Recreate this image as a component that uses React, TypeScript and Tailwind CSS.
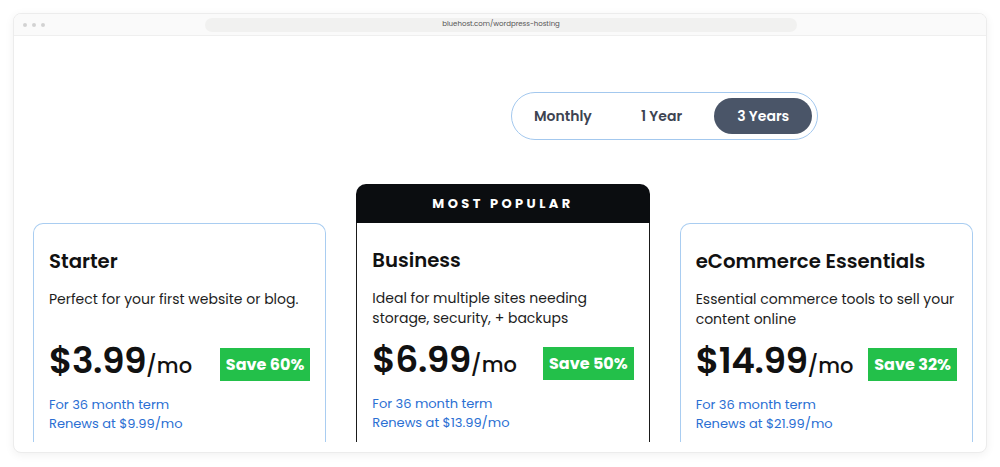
const plans = [
  {
    name: 'Starter',
    desc: 'Perfect for your first website or blog.',
    price: '$3.99',
    save: 'Save 60%',
    renew: 'Renews at $9.99/mo',
    popular: false,
  },
  {
    name: 'Business',
    desc: 'Ideal for multiple sites needing storage, security, + backups',
    price: '$6.99',
    save: 'Save 50%',
    renew: 'Renews at $13.99/mo',
    popular: true,
  },
  {
    name: 'eCommerce Essentials',
    desc: 'Essential commerce tools to sell your content online',
    price: '$14.99',
    save: 'Save 32%',
    renew: 'Renews at $21.99/mo',
    popular: false,
  },
];

const PlanBody = ({ plan }: { plan: (typeof plans)[number] }) => (
  <div className="px-[15px] pt-[23px]">
    <h3 className="text-[19.7px] leading-[28px] font-semibold text-[#111]">
      {plan.name}
    </h3>
    <p className="mt-[14px] h-[40px] text-[14px] leading-[20px] text-[#1d1d1d]">
      {plan.desc}
    </p>
    <div className="mt-[12px] flex items-center justify-between h-[40px]">
      <div className="flex items-baseline text-[#111]">
        <span className="text-[36px] leading-[40px] font-semibold tracking-[-0.5px]">
          {plan.price}
        </span>
        <span className="text-[21px] font-medium">/mo</span>
      </div>
      <span className="mt-[7px] h-[33px] px-[6px] flex items-center bg-[#23c04a] text-white text-[16px] font-bold">
        {plan.save}
      </span>
    </div>
    <div className="mt-[14px] text-[13px] leading-[19px] text-[#2b6fd3]">
      <div>For 36 month term</div>
      <div>{plan.renew}</div>
    </div>
  </div>
);

export default function App() {
  return (
    <div
      className="w-[1000px] h-[467px] bg-white pt-[13px] px-[13px]"
      style={{ fontFamily: 'Poppins, "Open Sans", Inter, sans-serif' }}
    >
      <div className="h-[440px] rounded-[8px] border border-[#ececec] bg-white shadow-[0_2px_10px_rgba(0,0,0,0.06)] overflow-hidden flex flex-col">
        <div className="h-[22px] shrink-0 bg-[#fafafa] border-b border-[#efefef] flex items-center px-[9px] relative">
          <div className="flex gap-[5px]">
            <span className="w-[4px] h-[4px] rounded-full bg-[#d2d2d2]" />
            <span className="w-[4px] h-[4px] rounded-full bg-[#d2d2d2]" />
            <span className="w-[4px] h-[4px] rounded-full bg-[#d2d2d2]" />
          </div>
          <div className="ml-[160px] w-[592px] h-[14px] rounded-full bg-[#f1f1f0] flex items-center justify-center text-[7px] text-[#555]">
            bluehost.com/wordpress-hosting
          </div>
        </div>

        <div className="pt-[56px] pl-[497px]">
          <div className="w-[307px] h-[48px] rounded-full border border-[#a3c8ee] flex items-center px-[5px] text-[14px] font-semibold text-[#3d4452]">
            <div className="w-[92px] text-center">Monthly</div>
            <div className="w-[106px] text-center">1 Year</div>
            <div className="w-[98px] h-[36px] rounded-full bg-[#4a5568] text-white flex items-center justify-center">
              3 Years
            </div>
          </div>
        </div>

        <div className="mt-[44px] h-[258px] overflow-hidden pl-[19px] pr-[13px] grid grid-cols-3 gap-[30px]">
          {plans.map((plan) =>
            plan.popular ? (
              <div key={plan.name} className="flex flex-col">
                <div className="h-[39px] shrink-0 rounded-t-[10px] bg-[#0b0d10] flex items-center justify-center text-white text-[13px] font-bold tracking-[3.4px]">
                  MOST POPULAR
                </div>
                <div className="flex-1 border-x border-[#1a1a1a] bg-white">
                  <PlanBody plan={plan} />
                </div>
              </div>
            ) : (
              <div key={plan.name} className="mt-[39px] rounded-t-[10px] border-x border-t border-[#a9cdf1] bg-white h-[300px]">
                <PlanBody plan={plan} />
              </div>
            )
          )}
        </div>
      </div>
    </div>
  );
}
